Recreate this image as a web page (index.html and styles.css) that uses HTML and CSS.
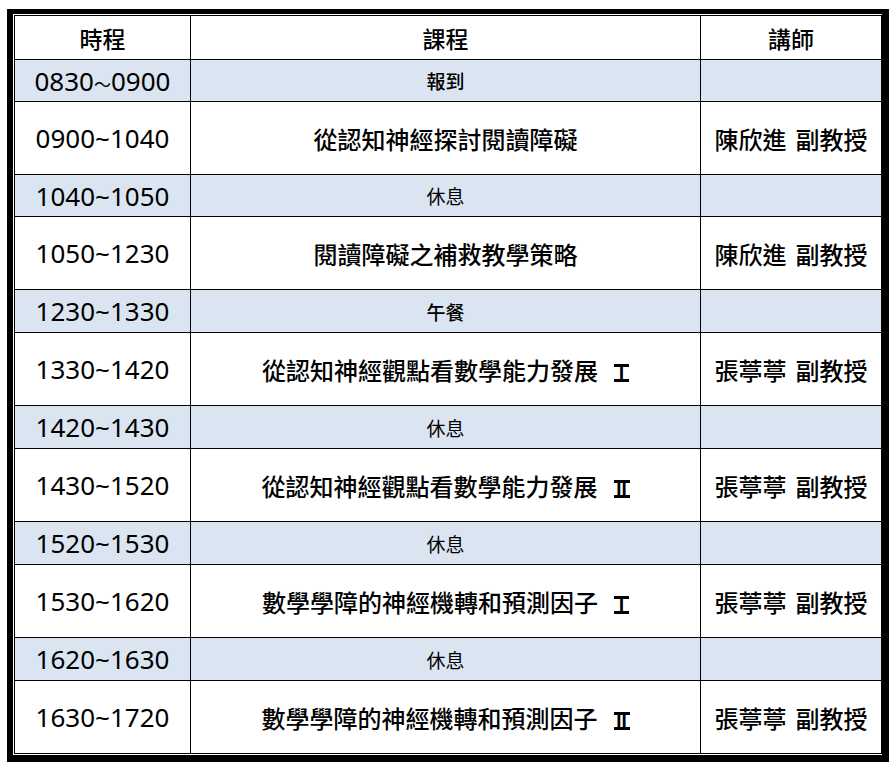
FILE: index.html
```html
<!DOCTYPE html>
<html lang="zh-Hant">
<head>
<meta charset="utf-8">
<title>課程時程</title>
<link rel="stylesheet" href="styles.css">
</head>
<body>
<div class="frame">
  <table class="schedule">
    <colgroup>
      <col class="c-time">
      <col class="c-course">
      <col class="c-teacher">
    </colgroup>
    <tr class="head">
      <th>時程</th><th>課程</th><th>講師</th>
    </tr>
    <tr class="short s1">
      <td class="time">0830<span class="wave">～</span>0900</td><td class="minor">報到</td><td></td>
    </tr>
    <tr class="tall">
      <td class="time">0900~1040</td><td class="course">從認知神經探討閱讀障礙</td><td class="teacher">陳欣進<span class="sp"> </span>副教授</td>
    </tr>
    <tr class="short s1">
      <td class="time">1040~1050</td><td class="minor light">休息</td><td></td>
    </tr>
    <tr class="tall">
      <td class="time">1050~1230</td><td class="course">閱讀障礙之補救教學策略</td><td class="teacher">陳欣進<span class="sp"> </span>副教授</td>
    </tr>
    <tr class="short">
      <td class="time">1230~1330</td><td class="minor">午餐</td><td></td>
    </tr>
    <tr class="tall">
      <td class="time">1330~1420</td><td class="course">從認知神經觀點看數學能力發展<span class="num">Ⅰ</span></td><td class="teacher">張葶葶<span class="sp"> </span>副教授</td>
    </tr>
    <tr class="short">
      <td class="time">1420~1430</td><td class="minor light">休息</td><td></td>
    </tr>
    <tr class="tall">
      <td class="time">1430~1520</td><td class="course">從認知神經觀點看數學能力發展<span class="num two">Ⅱ</span></td><td class="teacher">張葶葶<span class="sp"> </span>副教授</td>
    </tr>
    <tr class="short">
      <td class="time">1520~1530</td><td class="minor light">休息</td><td></td>
    </tr>
    <tr class="tall">
      <td class="time">1530~1620</td><td class="course">數學學障的神經機轉和預測因子<span class="num">Ⅰ</span></td><td class="teacher">張葶葶<span class="sp"> </span>副教授</td>
    </tr>
    <tr class="short">
      <td class="time">1620~1630</td><td class="minor light">休息</td><td></td>
    </tr>
    <tr class="tall">
      <td class="time">1630~1720</td><td class="course">數學學障的神經機轉和預測因子<span class="num two">Ⅱ</span></td><td class="teacher">張葶葶<span class="sp"> </span>副教授</td>
    </tr>
  </table>
</div>
</body>
</html>
```
FILE: styles.css
```css
html, body {
  margin: 0;
  padding: 0;
  background: #ffffff;
}

body {
  font-family: "Noto Sans", "Noto Sans CJK TC", sans-serif;
  color: #000000;
}

.frame {
  margin: 9px 0 0 7px;
  border-style: solid;
  border-color: #000000;
  border-width: 5px 7px 7px 6px;
  padding: 1px;
  box-sizing: border-box;
  width: 882px;
  background: #ffffff;
}

.schedule {
  border-collapse: collapse;
  table-layout: fixed;
  width: 867px;
  border: 1px solid #000000;
}

.c-time { width: 176px; }
.c-course { width: 510px; }
.c-teacher { width: 181px; }

.schedule th,
.schedule td {
  border: 1px solid #000000;
  padding: 0;
  text-align: center;
  vertical-align: middle;
  white-space: nowrap;
}

.schedule th {
  font-family: "Noto Sans CJK TC", sans-serif;
  font-weight: 500;
  font-size: 23px;
  height: 43px;
}

.short td {
  background: #dbe5f1;
  height: 42px;
}

.short.s1 td {
  height: 41px;
}

.tall td {
  height: 72px;
}

.time {
  font-size: 26px;
  font-weight: 400;
}

.wave {
  font-family: "Noto Sans CJK TC", sans-serif;
  font-size: 17px;
}

.course,
.teacher {
  font-family: "Noto Sans CJK TC", sans-serif;
  font-size: 24px;
  font-weight: 500;
}

/* Roman numeral with serif bars like the reference glyph */
.num {
  display: inline-block;
  box-sizing: border-box;
  width: 15px;
  margin-left: 16px;
  border-top: 3px solid #000000;
  border-bottom: 3px solid #000000;
  font-family: "Noto Sans CJK TC", sans-serif;
  font-weight: 900;
  font-size: 15px;
  line-height: 12px;
  text-align: center;
  vertical-align: 1px;
}

.num.two {
  width: 16px;
}

.sp {
  display: inline-block;
  width: 9px;
}

.minor {
  font-family: "Noto Sans CJK TC", sans-serif;
  font-size: 19px;
  font-weight: 500;
}

.minor.light {
  font-weight: 400;
}
```
